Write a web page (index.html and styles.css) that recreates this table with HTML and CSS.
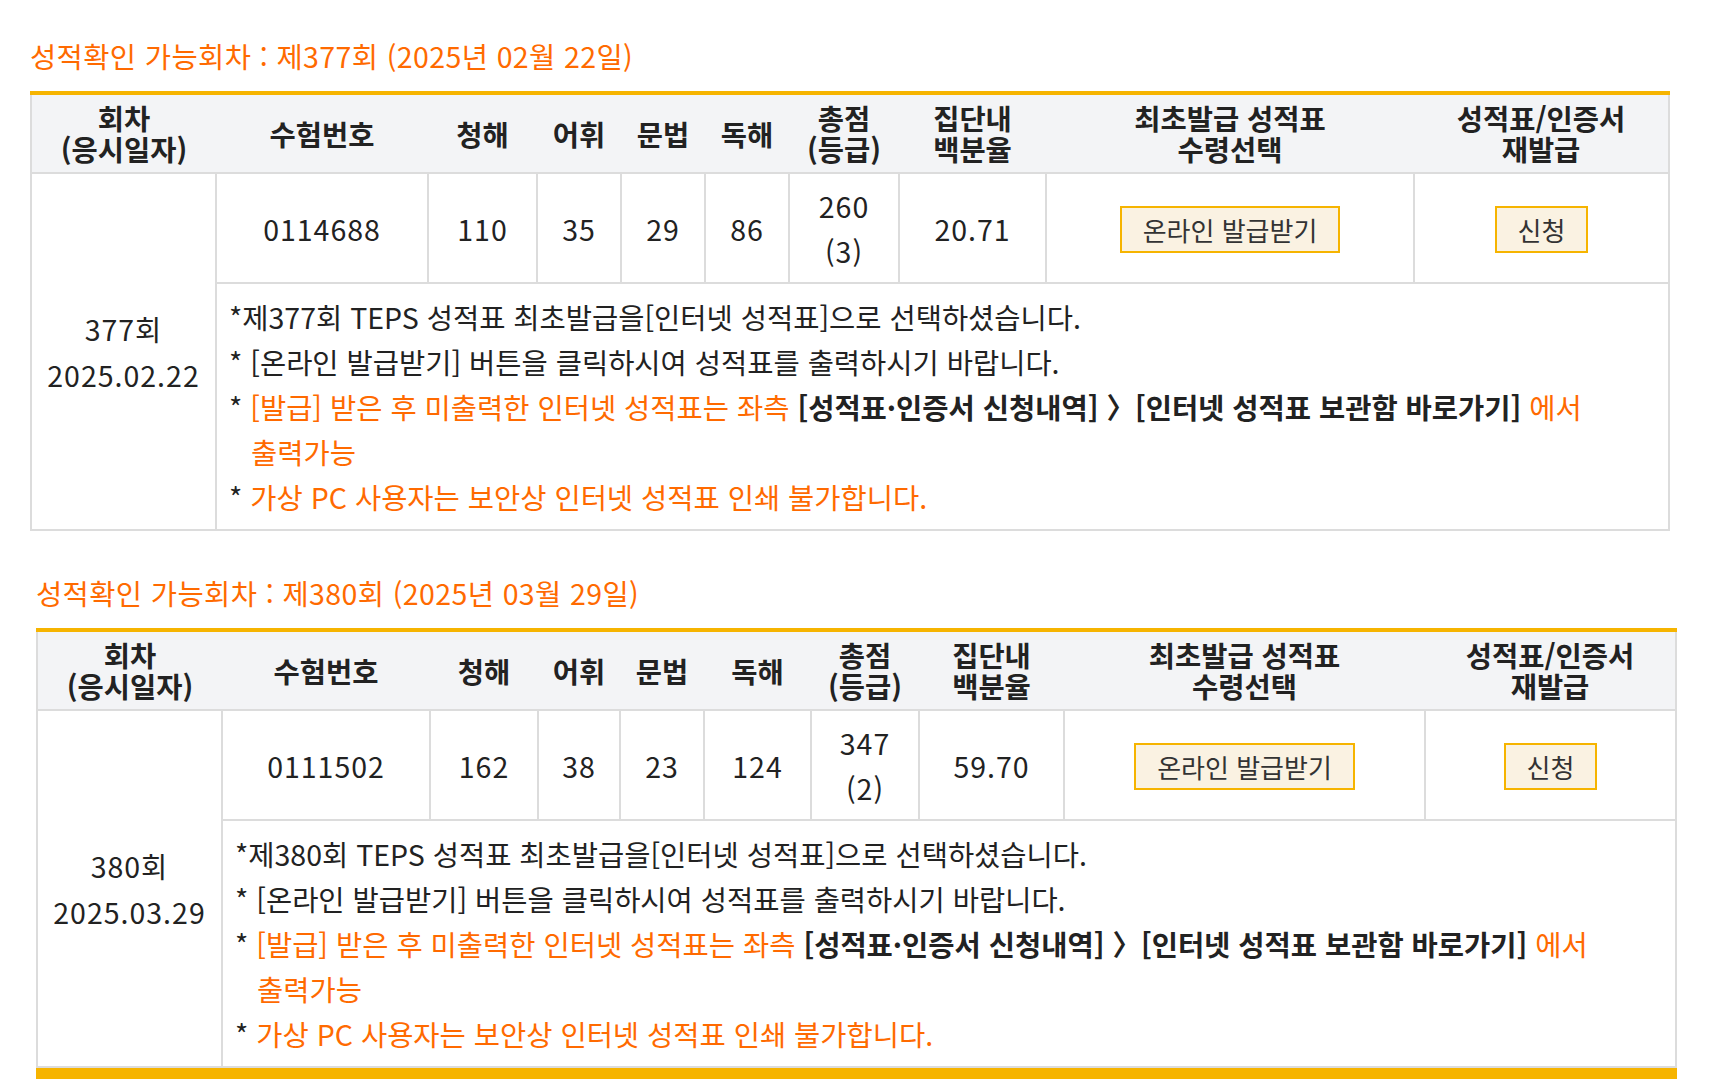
FILE: index.html
```html
<!DOCTYPE html>
<html lang="ko">
<head>
<meta charset="utf-8">
<title>성적확인</title>
<link rel="stylesheet" href="styles.css">
</head>
<body>
<section class="section section--first">
  <h2 class="section-title">성적확인 가능회차 : 제377회 (2025년 02월 22일)</h2>
  <table class="score-table score-table--a">
    <colgroup>
      <col class="c1"><col class="c2"><col class="c3"><col class="c4"><col class="c5">
      <col class="c6"><col class="c7"><col class="c8"><col class="c9"><col class="c10">
    </colgroup>
    <thead>
      <tr>
        <th>회차<br>(응시일자)</th>
        <th>수험번호</th>
        <th>청해</th>
        <th>어휘</th>
        <th>문법</th>
        <th>독해</th>
        <th>총점<br>(등급)</th>
        <th>집단내<br>백분율</th>
        <th>최초발급 성적표<br>수령선택</th>
        <th>성적표/인증서<br>재발급</th>
      </tr>
    </thead>
    <tbody>
      <tr>
        <td rowspan="2" class="num round-cell">377회<br>2025.02.22</td>
        <td class="num">0114688</td>
        <td class="num">110</td>
        <td class="num">35</td>
        <td class="num">29</td>
        <td class="num">86</td>
        <td class="num">260<br>(3)</td>
        <td class="num">20.71</td>
        <td><button class="btn" type="button">온라인 발급받기</button></td>
        <td><button class="btn" type="button">신청</button></td>
      </tr>
      <tr>
        <td colspan="9" class="notes-cell">
          <p class="note-line">*제377회 TEPS 성적표 최초발급을[인터넷 성적표]으로 선택하셨습니다.</p>
          <p class="note-line">* [온라인 발급받기] 버튼을 클릭하시여 성적표를 출력하시기 바랍니다.</p>
          <p class="note-line">* <span class="warn">[발급] 받은 후 미출력한 인터넷 성적표는 좌측 </span><strong class="strong">[성적표·인증서 신청내역] 〉[인터넷 성적표 보관함 바로가기]</strong><span class="warn"> 에서<br>출력가능</span></p>
          <p class="note-line">* <span class="warn">가상 PC 사용자는 보안상 인터넷 성적표 인쇄 불가합니다.</span></p>
        </td>
      </tr>
    </tbody>
  </table>
</section>

<section class="section section--second">
  <h2 class="section-title">성적확인 가능회차 : 제380회 (2025년 03월 29일)</h2>
  <table class="score-table score-table--b">
    <colgroup>
      <col class="c1"><col class="c2"><col class="c3"><col class="c4"><col class="c5">
      <col class="c6"><col class="c7"><col class="c8"><col class="c9"><col class="c10">
    </colgroup>
    <thead>
      <tr>
        <th>회차<br>(응시일자)</th>
        <th>수험번호</th>
        <th>청해</th>
        <th>어휘</th>
        <th>문법</th>
        <th>독해</th>
        <th>총점<br>(등급)</th>
        <th>집단내<br>백분율</th>
        <th>최초발급 성적표<br>수령선택</th>
        <th>성적표/인증서<br>재발급</th>
      </tr>
    </thead>
    <tbody>
      <tr>
        <td rowspan="2" class="num round-cell">380회<br>2025.03.29</td>
        <td class="num">0111502</td>
        <td class="num">162</td>
        <td class="num">38</td>
        <td class="num">23</td>
        <td class="num">124</td>
        <td class="num">347<br>(2)</td>
        <td class="num">59.70</td>
        <td><button class="btn" type="button">온라인 발급받기</button></td>
        <td><button class="btn" type="button">신청</button></td>
      </tr>
      <tr>
        <td colspan="9" class="notes-cell">
          <p class="note-line">*제380회 TEPS 성적표 최초발급을[인터넷 성적표]으로 선택하셨습니다.</p>
          <p class="note-line">* [온라인 발급받기] 버튼을 클릭하시여 성적표를 출력하시기 바랍니다.</p>
          <p class="note-line">* <span class="warn">[발급] 받은 후 미출력한 인터넷 성적표는 좌측 </span><strong class="strong">[성적표·인증서 신청내역] 〉[인터넷 성적표 보관함 바로가기]</strong><span class="warn"> 에서<br>출력가능</span></p>
          <p class="note-line">* <span class="warn">가상 PC 사용자는 보안상 인터넷 성적표 인쇄 불가합니다.</span></p>
        </td>
      </tr>
    </tbody>
  </table>
  <div class="next-rule"></div>
</section>
</body>
</html>
```

FILE: styles.css
```css
* {
  box-sizing: border-box;
}

html, body {
  margin: 0;
  background: #ffffff;
}

body {
  padding-top: 33px;
  font-family: "Noto Sans CJK KR", "Noto Sans", sans-serif;
  color: #222222;
}

.section {
  width: 1640px;
}

.section--first {
  margin-left: 30px;
}

.section--second {
  margin-left: 36px;
  margin-top: 39px;
  width: 1641px;
}

.section-title {
  margin: 0 0 13px;
  font-size: 28.5px;
  line-height: 45px;
  font-weight: 400;
  color: #ff6a00;
  letter-spacing: 0.4px;
}

.score-table {
  width: 100%;
  table-layout: fixed;
  border-collapse: collapse;
  border-top: 4px solid #f6b400;
  border-left: 2px solid #dcdcdc;
  border-right: 2px solid #dcdcdc;
  border-bottom: 2px solid #dcdcdc;
}

.score-table--a .c1 { width: 185px; }
.score-table--a .c2 { width: 212px; }
.score-table--a .c3 { width: 109px; }
.score-table--a .c4 { width: 84px; }
.score-table--a .c5 { width: 84px; }
.score-table--a .c6 { width: 84px; }
.score-table--a .c7 { width: 110px; }
.score-table--a .c8 { width: 147px; }
.score-table--a .c9 { width: 368px; }
.score-table--a .c10 { width: 255px; }

.score-table--b .c1 { width: 185px; }
.score-table--b .c2 { width: 208px; }
.score-table--b .c3 { width: 108px; }
.score-table--b .c4 { width: 82px; }
.score-table--b .c5 { width: 84px; }
.score-table--b .c6 { width: 107px; }
.score-table--b .c7 { width: 108px; }
.score-table--b .c8 { width: 145px; }
.score-table--b .c9 { width: 361px; }
.score-table--b .c10 { width: 251px; }

.score-table th {
  background: #f3f4f6;
  font-size: 28.5px;
  line-height: 31px;
  font-weight: 700;
  color: #222222;
  padding: 7px 0 8px;
  text-align: center;
  vertical-align: middle;
  border-bottom: 2px solid #dcdcdc;
  white-space: nowrap;
}

.score-table td {
  border: 2px solid #dcdcdc;
  font-size: 28.5px;
  line-height: 45px;
  padding: 9px 4px;
  text-align: center;
  vertical-align: middle;
  color: #222222;
}

.score-table td.num {
  letter-spacing: 1px;
}

.score-table td.round-cell {
  line-height: 46px;
}

.score-table td.notes-cell {
  text-align: left;
  padding: 10px 12px;
  line-height: 45px;
}

.note-line {
  margin: 0;
  padding-left: 22px;
  text-indent: -22px;
}

.warn {
  color: #ff6a00;
}

.strong {
  font-weight: 700;
  color: #222222;
}

.btn {
  display: inline-block;
  margin: 0;
  padding: 0 21px;
  height: 47px;
  font-family: inherit;
  font-size: 26px;
  line-height: 43px;
  color: #333333;
  background: #faf2e2;
  border: 2px solid #f6b400;
  border-radius: 0;
  vertical-align: middle;
  cursor: pointer;
}

.next-rule {
  height: 14px;
  background: #f6b400;
}
```
